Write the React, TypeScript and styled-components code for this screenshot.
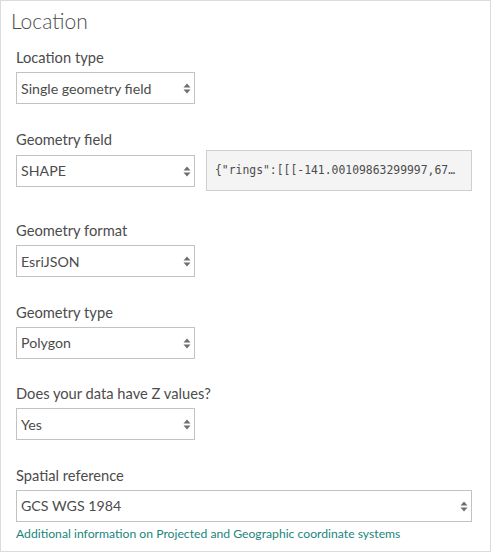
import styled, { createGlobalStyle } from 'styled-components'

const GlobalStyle = createGlobalStyle`
  body {
    margin: 0;
    background: #fff;
    font-family: Lato, "Open Sans", sans-serif;
    color: #4c4c4c;
  }
`

type Option = { label: string; value?: string }

function Picker({ value, wide }: { value: string; wide?: boolean }) {
  return (
    <SelectWrap $wide={wide}>
      <Select defaultValue={value}>
        <option>{value}</option>
      </Select>
      <Arrows width="8" height="11" viewBox="0 0 8 11">
        <path d="M4 0.5 L7.5 4.5 H0.5 Z" fill="#6e6e6e" />
        <path d="M4 10.5 L7.5 6.5 H0.5 Z" fill="#6e6e6e" />
      </Arrows>
    </SelectWrap>
  )
}

const fields: Option[] = [
  { label: 'Geometry format', value: 'EsriJSON' },
  { label: 'Geometry type', value: 'Polygon' },
  { label: 'Does your data have Z values?', value: 'Yes' },
]

export default function App() {
  return (
    <>
      <GlobalStyle />
      <Panel>
        <Title>Location</Title>

        <Group>
          <Label>Location type</Label>
          <Picker value="Single geometry field" />
        </Group>

        <Group $after={29}>
          <Label $tight>Geometry field</Label>
          <Row>
            <Picker value="SHAPE" />
            <Preview>{'{"rings":[[[-141.00109863299997,67…'}</Preview>
          </Row>
        </Group>

        {fields.map((f) => (
          <Group key={f.label} $after={24.5}>
            <Label>{f.label}</Label>
            <Picker value={f.value ?? ''} />
          </Group>
        ))}

        <Group $after={0}>
          <Label>Spatial reference</Label>
          <Picker value="GCS WGS 1984" wide />
          <Link href="#">Additional information on Projected and Geographic coordinate systems</Link>
        </Group>
      </Panel>
    </>
  )
}

const Panel = styled.div`
  box-sizing: border-box;
  width: 491px;
  height: 552px;
  border: 1px solid #dcdcdc;
  padding: 7px 18px 0 15px;
`

const Title = styled.h2`
  margin: 0 0 13px -5px;
  font-size: 21px;
  font-weight: 300;
  line-height: 26px;
  color: #4c4c4c;
`

const Group = styled.div<{ $after?: number }>`
  display: flex;
  flex-direction: column;
  align-items: flex-start;
  margin-bottom: ${(p) => (p.$after ?? 25)}px;
`

const Label = styled.label<{ $tight?: boolean }>`
  font-size: 14.7px;
  line-height: 20px;
  color: #4c4c4c;
  margin-bottom: ${(p) => (p.$tight ? 1 : 5)}px;
`

const Row = styled.div`
  display: flex;
  align-items: center;
  gap: 11px;
  width: 100%;
`

const SelectWrap = styled.div<{ $wide?: boolean }>`
  position: relative;
  width: ${(p) => (p.$wide ? '100%' : '179px')};
  height: 32px;
  flex-shrink: 0;
`

const Select = styled.select`
  appearance: none;
  box-sizing: border-box;
  width: 100%;
  height: 100%;
  border: 1px solid #c2c2c2;
  border-radius: 0;
  background: #fff;
  padding: 0 20px 0 4px;
  font-family: Lato, "Open Sans", sans-serif;
  font-size: 14.2px;
  color: #4c4c4c;
  outline: none;
`

const Arrows = styled.svg`
  position: absolute;
  right: 4px;
  top: 11px;
  pointer-events: none;
`

const Preview = styled.div`
  box-sizing: border-box;
  width: 266px;
  height: 41px;
  padding: 0 8px;
  border: 1px solid #cfcfcf;
  background: #f4f4f4;
  font-family: "DejaVu Sans Mono", "Liberation Mono", monospace;
  font-size: 11.4px;
  line-height: 39px;
  color: #4c4c4c;
  white-space: nowrap;
  overflow: hidden;
`

const Link = styled.a`
  margin-top: 4px;
  font-size: 12.2px;
  line-height: 16px;
  color: #1a857d;
  text-decoration: none;
`
